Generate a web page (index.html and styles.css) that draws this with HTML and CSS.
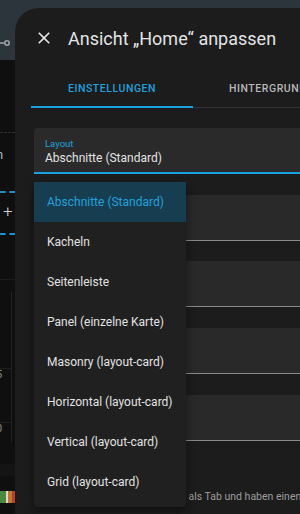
FILE: index.html
```html
<!DOCTYPE html>
<html lang="de">
<head>
<meta charset="UTF-8" />
<meta name="viewport" content="width=device-width, initial-scale=1" />
<title>Ansicht anpassen</title>
<link rel="stylesheet" href="styles.css">
</head>
<body>
  <!-- dashboard behind the dialog, only a sliver is visible -->
  <div class="backdrop">
    <div class="bg-toolbar">
      <svg width="15" height="10" viewBox="0 0 15 10"><path d="M0 4h7" stroke="#9aa3a8" stroke-width="1.6"/><circle cx="10" cy="4" r="2.2" fill="none" stroke="#9aa3a8" stroke-width="1.6"/></svg>
    </div>
    <div class="bg-rule"></div>
    <div class="bg-word">n</div>
    <div class="bg-dash"></div>
    <div class="bg-plus">+</div>
    <div class="bg-dash"></div>
    <div class="bg-rule faint"></div>
    <div class="bg-chart">
      <div class="bg-tick">5</div>
      <div class="bg-tick">0</div>
    </div>
    <div class="bg-band"></div>
    <div class="bg-gauge"><span class="g1"></span><span class="g2"></span><span class="g3"></span><span class="g4"></span></div>
  </div>

  <div class="dialog">
    <header class="dialog-header">
      <button class="close" aria-label="Schließen">
        <svg width="20" height="20" viewBox="0 0 24 24"><path d="M19 6.41 17.59 5 12 10.59 6.41 5 5 6.41 10.59 12 5 17.59 6.41 19 12 13.41 17.59 19 19 17.59 13.41 12z" fill="#e1e1e1"/></svg>
      </button>
      <h2>Ansicht „Home“ anpassen</h2>
    </header>

    <nav class="tabs">
      <div class="tab active">Einstellungen</div>
      <div class="tab">Hintergrund</div>
    </nav>

    <div class="content">
      <div class="select">
        <span class="select-label">Layout</span>
        <span class="select-value">Abschnitte (Standard)</span>
      </div>

      <ul class="menu">
        <li class="menu-item selected">Abschnitte (Standard)</li>
        <li class="menu-item">Kacheln</li>
        <li class="menu-item">Seitenleiste</li>
        <li class="menu-item">Panel (einzelne Karte)</li>
        <li class="menu-item">Masonry (layout-card)</li>
        <li class="menu-item">Horizontal (layout-card)</li>
        <li class="menu-item">Vertical (layout-card)</li>
        <li class="menu-item">Grid (layout-card)</li>
      </ul>

      <div class="field"></div>
      <div class="field"></div>
      <div class="field"></div>
      <div class="field"></div>

      <p class="hint">Unteransichten erscheinen nicht als Tab und haben einen Zurück-Button.</p>
    </div>
  </div>
</body>
</html>
```

FILE: styles.css
```css
* {
  margin: 0;
  padding: 0;
  box-sizing: border-box;
}
body {
  width: 300px;
  height: 514px;
  overflow: hidden;
  display: flex;
  font-family: Roboto, "Noto Sans", sans-serif;
  background: linear-gradient(#2c353b 0 60px, #0f0f0f 60px);
  color: #e1e1e1;
}

/* Backdrop sliver */
.backdrop {
  width: 15px;
  flex-shrink: 0;
  overflow: hidden;
}
.bg-toolbar {
  height: 60px;
  padding-top: 39px;
}
.bg-toolbar svg {
  display: block;
  margin-left: -3px;
}
.bg-rule {
  height: 1px;
  margin-top: 72px;
  border-top: 1px dashed #2e2e2e;
}
.bg-rule.faint {
  margin-top: 44px;
  border-top: 1px solid #1c1c1c;
}
.bg-word {
  margin-top: 14px;
  margin-left: -4px;
  font-size: 13px;
  line-height: 16px;
  color: #b5b5b5;
}
.bg-dash {
  height: 2px;
  margin-top: 28px;
  border-top: 2px dashed #1b8fcf;
}
.bg-plus {
  margin-top: 10px;
  margin-left: 3px;
  font-size: 17px;
  line-height: 16px;
  font-weight: 300;
  color: #cfcfcf;
}
.bg-plus + .bg-dash {
  margin-top: 14px;
}
.bg-chart {
  height: 150px;
  margin-top: 12px;
  border-right: 1px solid #222;
  margin-right: 3px;
  padding-top: 76px;
}
.bg-tick {
  height: 54px;
  margin-left: -4px;
  font-size: 11px;
  line-height: 12px;
  color: #8a8a8a;
  border-top: 1px solid #1e1e1e;
}
.bg-band {
  height: 12px;
  margin-top: 22px;
  background: #141414;
}
.bg-gauge {
  display: flex;
  height: 12px;
  margin-top: 15px;
}
.bg-gauge span { height: 100%; }
.g1 { width: 6px; background: #4a8a3c; }
.g2 { width: 2px; background: #d8d8d8; }
.g3 { width: 4px; background: #c8752c; }
.g4 { width: 3px; background: #b5402f; }

/* Dialog */
.dialog {
  width: 380px;
  flex-shrink: 0;
  margin-top: 8px;
  background: #1c1c1c;
  border-top-left-radius: 24px;
}
.dialog-header {
  height: 60px;
  display: flex;
  align-items: center;
  gap: 14px;
  padding-left: 19px;
}
.close {
  display: flex;
  background: none;
  border: none;
}
.dialog-header h2 {
  font-size: 18px;
  font-weight: 400;
  color: #e3e3e3;
  white-space: nowrap;
}

.tabs {
  display: flex;
  height: 40px;
  margin-left: 16px;
  box-shadow: inset 0 -1px #353535;
}
.tab {
  display: flex;
  align-items: center;
  font-size: 10.5px;
  font-weight: 500;
  letter-spacing: 0.55px;
  text-transform: uppercase;
  color: #b8b8b8;
  white-space: nowrap;
}
.tab.active {
  width: 162px;
  justify-content: center;
  color: #22a0dc;
  box-shadow: inset 0 -2px #1a9fe0;
}
.tab + .tab {
  padding-left: 36px;
}

.content {
  position: relative;
  padding: 20px 0 0 19px;
}
.select {
  height: 46px;
  padding: 10px 0 0 11px;
  background: #2a2a2a;
  border-radius: 4px 4px 0 0;
  border-bottom: 2px solid #1a9fe0;
}
.select-label {
  display: block;
  font-size: 9.5px;
  line-height: 12px;
  color: #22a0dc;
}
.select-value {
  display: block;
  font-size: 12px;
  line-height: 16px;
  color: #e3e3e3;
}

.menu {
  position: absolute;
  top: 74px;
  left: 19px;
  width: 152px;
  padding-bottom: 5px;
  list-style: none;
  background: #202020;
  border-radius: 4px;
  box-shadow: 0 4px 10px rgb(0 0 0 / 0.45);
  z-index: 2;
}
.menu-item {
  height: 40px;
  display: flex;
  align-items: center;
  padding-left: 13px;
  font-size: 12px;
  color: #e2e2e2;
  white-space: nowrap;
}
.menu-item.selected {
  background: #173e50;
  color: #25a0dc;
}

.field {
  height: 46px;
  margin-top: 20.7px;
  background: #292929;
  border-radius: 4px 4px 0 0;
  border-bottom: 1px solid #8a8a8a;
}
.hint {
  margin-top: 48px;
  padding-left: 2px;
  font-size: 10.5px;
  line-height: 16px;
  color: #9c9c9c;
  white-space: nowrap;
}
```
